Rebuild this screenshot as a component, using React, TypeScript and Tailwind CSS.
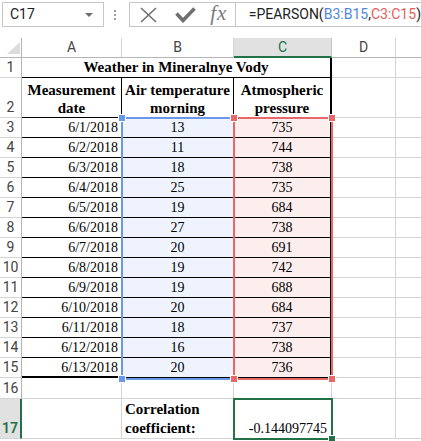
import React from "react";

const dates = [
  "6/1/2018", "6/2/2018", "6/3/2018", "6/4/2018", "6/5/2018", "6/6/2018", "6/7/2018",
  "6/8/2018", "6/9/2018", "6/10/2018", "6/11/2018", "6/12/2018", "6/13/2018",
];
const temps = [13, 11, 18, 25, 19, 27, 20, 19, 19, 20, 18, 16, 20];
const pressure = [735, 744, 738, 735, 684, 738, 691, 742, 688, 684, 737, 738, 736];

function RowHead({ n, tall, selected }: { n: number; tall?: boolean; selected?: boolean }) {
  return (
    <div
      className={
        "flex justify-center border-b border-b-[#d4d4d4] font-[Roboto] text-[14px] leading-[19px] " +
        (tall ? "items-end " : "items-center ") +
        (selected
          ? "bg-[#e1e1e1] text-[#217346] font-semibold border-r-2 border-r-[#217346]"
          : "bg-white text-[#444] border-r border-r-[#b5b5b5]")
      }
    >
      {n}
    </div>
  );
}

function Blank({ extra = "" }: { extra?: string }) {
  return <div className={"border-r border-b border-[#d4d4d4] " + extra} />;
}

function Handle({ className }: { className: string }) {
  return <div className={"absolute w-[6px] h-[6px] outline outline-1 outline-white " + className} />;
}

export default function App() {
  return (
    <div className="w-[421px] h-[441px] overflow-hidden bg-white">
      {/* Formula bar */}
      <div className="h-[38px] flex items-start pt-[2px] pl-[2px]">
        <div className="w-[106px] h-[25px] border border-[#c6c6c6] flex items-center justify-between pl-[7px] pr-[10px]">
          <span className="font-[Roboto] text-[14px] text-[#222]">C17</span>
          <span className="w-0 h-0 border-l-[4px] border-r-[4px] border-t-[4px] border-l-transparent border-r-transparent border-t-[#6d6d6d]" />
        </div>
        <div className="w-[26px] h-[25px] flex flex-col justify-center gap-[2px] pl-[10px]">
          <span className="w-[2px] h-[2px] bg-[#a0a0a0]" />
          <span className="w-[2px] h-[2px] bg-[#a0a0a0]" />
          <span className="w-[2px] h-[2px] bg-[#a0a0a0]" />
        </div>
        <div className="w-[111px] h-[25px] border border-[#c6c6c6] flex items-center pl-[10px]">
          <svg width="17" height="16" viewBox="0 0 17 16" className="mt-[1px]">
            <path d="M1 1 L16 15 M16 1 L1 15" stroke="#707070" strokeWidth="1.6" fill="none" />
          </svg>
          <svg width="21" height="16" viewBox="0 0 21 16" className="ml-[18px] mt-[1px]">
            <path d="M1.5 6.5 L8 13.5 L19.5 1.5" stroke="#707070" strokeWidth="3.6" fill="none" />
          </svg>
          <span className="ml-[14px] font-['Liberation_Serif'] italic text-[21px] leading-[20px] tracking-[1px] text-[#7a7a7a] -mt-[3px]">
            fx
          </span>
        </div>
        <div className="flex-1 h-[25px] border-t border-b border-[#c6c6c6] pl-[13px] flex items-center font-[Roboto] text-[14px] text-[#222] whitespace-nowrap">
          =PEARSON(<span className="text-[#4f86de]">B3:B15</span>,<span className="text-[#e35d5d]">C3:C15</span>)
        </div>
      </div>

      {/* Sheet grid */}
      <div className="relative grid grid-cols-[22px_100px_112px_98px_64px_1fr] grid-rows-[20px_20px_40px_repeat(13,20px)_21px_40px] font-['Liberation_Serif'] text-black">
        {/* Column headers */}
        <div className="relative border-r border-b border-[#b5b5b5] bg-white">
          <svg width="13" height="12" viewBox="0 0 13 12" className="absolute left-[7px] top-[4px]">
            <polygon points="0,12 13,12 13,0" fill="#dcdcdc" />
          </svg>
        </div>
        {["A", "B"].map((c) => (
          <div key={c} className="flex items-center justify-center border-b border-b-[#b5b5b5] border-r border-r-[#d4d4d4] font-[Roboto] text-[14px] text-[#444]">
            {c}
          </div>
        ))}
        <div className="flex items-center justify-center bg-[#e1e1e1] border-b-2 border-b-[#217346] border-r border-r-[#c6c6c6] font-[Roboto] text-[14px] text-[#217346]">
          C
        </div>
        <div className="flex items-center justify-center border-b border-b-[#b5b5b5] border-r border-r-[#d4d4d4] font-[Roboto] text-[14px] text-[#444]">
          D
        </div>
        <div className="border-b border-b-[#b5b5b5]" />

        {/* Row 1 */}
        <RowHead n={1} />
        <div className="col-span-3 flex items-center justify-center border-b border-b-black border-r-2 border-r-black font-bold text-[15px] leading-[19px]">
          Weather in Mineralnye Vody
        </div>
        <Blank />
        <Blank extra="border-r-0" />

        {/* Row 2 */}
        <RowHead n={2} tall />
        <div className="flex items-end justify-center text-center border-b border-r border-black font-bold text-[15px] leading-[18px]">
          Measurement<br />date
        </div>
        <div className="flex items-end justify-center text-center border-b border-r border-black font-bold text-[15px] leading-[18px]">
          Air temperature<br />morning
        </div>
        <div className="flex items-end justify-center text-center border-b border-b-black border-r-2 border-r-black font-bold text-[15px] leading-[18px]">
          Atmospheric<br />pressure
        </div>
        <Blank />
        <Blank extra="border-r-0" />

        {/* Data rows */}
        {dates.map((d, i) => {
          const last = i === dates.length - 1;
          return (
            <React.Fragment key={d}>
              <RowHead n={i + 3} />
              <div className={"flex items-center justify-end pr-[3px] border-r border-r-[#d4d4d4] border-b-black text-[14px] leading-[19px] " + (last ? "border-b-2" : "border-b")}>
                {d}
              </div>
              <div className="flex items-center justify-center bg-[#eef3fd] border-b border-b-black border-r border-r-black text-[14px] leading-[19px]">
                {temps[i]}
              </div>
              <div className="flex items-center justify-center bg-[#fdeeee] border-b border-b-black border-r-2 border-r-black text-[14px] leading-[19px]">
                {pressure[i]}
              </div>
              <Blank />
              <Blank extra="border-r-0" />
            </React.Fragment>
          );
        })}

        {/* Row 16 */}
        <RowHead n={16} />
        <Blank />
        <Blank />
        <Blank />
        <Blank />
        <Blank extra="border-r-0" />

        {/* Row 17 */}
        <RowHead n={17} tall selected />
        <Blank />
        <div className="flex items-end pl-[3px] border-r border-b border-[#d4d4d4] font-bold text-[15px] leading-[19px]">
          Correlation<br />coefficient:
        </div>
        <div className="flex items-end justify-end pr-[4px] border-r border-b border-[#d4d4d4] text-[14px] leading-[19px]">
          -0.144097745
        </div>
        <Blank />
        <Blank extra="border-r-0" />

        {/* Range highlights */}
        <div className="absolute left-[121px] top-[79px] w-[114px] h-[263px] border-2 border-[#6a98e8] pointer-events-none" />
        <div className="absolute left-[233px] top-[79px] w-[100px] h-[263px] border-2 border-[#e8686a] pointer-events-none" />
        <Handle className="bg-[#6a98e8] left-[119px] top-[77px]" />
        <Handle className="bg-[#6a98e8] left-[119px] top-[338px]" />
        <Handle className="bg-[#e8686a] left-[231px] top-[77px]" />
        <Handle className="bg-[#e8686a] left-[329px] top-[77px]" />
        <Handle className="bg-[#e8686a] left-[231px] top-[338px]" />
        <Handle className="bg-[#e8686a] left-[329px] top-[338px]" />

        {/* Active cell C17 */}
        <div className="absolute left-[233px] top-[360px] w-[100px] h-[42px] border-2 border-[#217346] pointer-events-none" />
        <Handle className="bg-[#217346] left-[329px] top-[398px]" />
      </div>
    </div>
  );
}
